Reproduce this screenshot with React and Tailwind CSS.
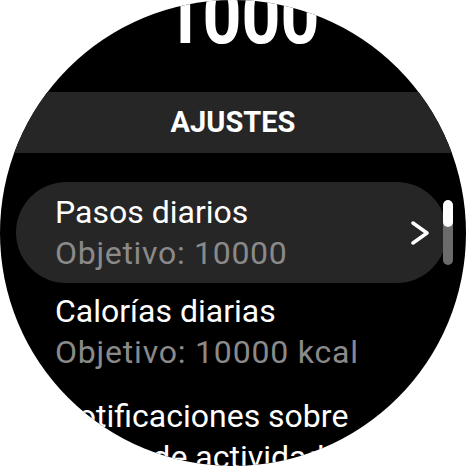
export default function App() {
  return (
    <div className="w-[466px] h-[466px] bg-white">
      <div
        className="relative w-[466px] h-[466px] rounded-full bg-black overflow-hidden text-white"
        style={{ fontFamily: "Roboto, 'Noto Sans', sans-serif" }}
      >
        {/* big number, cut by the top of the screen */}
        <div className="h-[92px] flex justify-center pl-[17px]">
          <div className="-mt-[12px] h-[68px] text-[68px] leading-[68px] font-bold origin-bottom scale-y-[1.15]">
            1000
          </div>
        </div>

        <div className="h-[61px] bg-[#262626] flex items-center justify-center">
          <span className="text-[29px] font-bold leading-none">AJUSTES</span>
        </div>

        <div className="mt-[29px] ml-[16px] w-[431px] h-[101px] rounded-full bg-[#262626] flex items-center justify-between pl-[39px] pr-[18px]">
          <div className="flex flex-col text-[32px] leading-[41px]">
            <span>Pasos diarios</span>
            <span className="text-[#8a8a8a] tracking-[0.7px]">Objetivo: 10000</span>
          </div>
          <svg width="18" height="24" viewBox="0 0 18 24" fill="none">
            <polyline
              points="2,2 16,12 2,22"
              stroke="white"
              strokeWidth="3.5"
              strokeLinecap="round"
              strokeLinejoin="round"
            />
          </svg>
        </div>

        <div className="absolute left-[443px] top-[200px] w-[10px] h-[65px] rounded-full bg-[#6b6b6b] overflow-hidden">
          <div className="h-[27px] rounded-full bg-white" />
        </div>

        <div className="mt-[8px] pl-[55px] flex flex-col text-[32px] leading-[41px]">
          <span>Calorías diarias</span>
          <span className="text-[#8a8a8a] tracking-[0.8px]">Objetivo: 10000 kcal</span>
        </div>

        <div className="mt-[23px] pl-[55px] flex flex-col text-[32px] leading-[41px]">
          <span>Notificaciones sobre</span>
          <span>metas de actividad</span>
        </div>
      </div>
    </div>
  );
}
